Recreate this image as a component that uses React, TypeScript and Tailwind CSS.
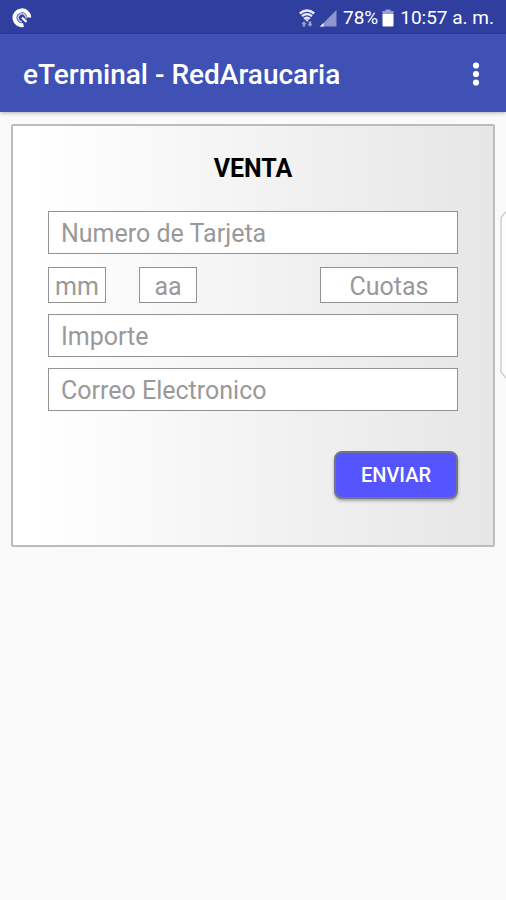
import React, { useState } from 'react';
import { clsx } from 'clsx';

interface FieldProps {
  id: string;
  label: string;
  value: string;
  onChange: (value: string) => void;
  className?: string;
  type?: string;
}

const Field: React.FC<FieldProps> = ({ id, label, value, onChange, className, type = 'text' }) => (
  <input
    id={id}
    type={type}
    aria-label={label}
    placeholder={label}
    value={value}
    onChange={(e) => onChange(e.target.value)}
    className={clsx(
      'block min-w-0 border border-[#929292] bg-white pt-0.5 text-[25px] leading-8 text-[#333] placeholder:text-[#999] focus:outline-none',
      className
    )}
  />
);

const StatusBar = () => (
  <div className="flex h-[34px] items-center justify-between bg-[#303f9f] px-3 pt-0.5 text-white">
    <svg width="20" height="20" viewBox="0 0 20 20" fill="none" stroke="#fff" aria-hidden="true">
      <path d="M17.3 9.5 A7.4 7.4 0 1 0 11.5 17" strokeWidth="4" />
      <path d="M14 10.5 A4 4 0 1 0 10 13.8" stroke="#c9cdea" strokeWidth="1.6" />
      <path d="M10 9.5 L14.5 14" strokeWidth="2.2" />
    </svg>
    <div className="flex items-center">
      <svg width="16" height="18" viewBox="0 0 16 18" fill="none" stroke="#e9ebf7" aria-hidden="true">
        <path d="M0.8 4.5 Q8 -1.5 15.2 4.5" strokeWidth="2.4" />
        <path d="M3 7.2 Q8 3 13 7.2" strokeWidth="2.2" />
        <path d="M5 9.8 Q8 7.3 11 9.8" strokeWidth="2.1" />
        <path d="M5.8 10.2 H10.2 L8 12.8 Z" fill="#e9ebf7" stroke="none" />
        <path d="M2.4 15 L5 12.2 L7.4 15 H6.3 V17.5 H3.7 V15 Z" fill="#99a1d3" stroke="none" />
        <path d="M8.6 15 H9.7 V12.5 H12.3 V15 H13.6 L11 17.8 Z" fill="#99a1d3" stroke="none" />
      </svg>
      <svg width="18" height="18" viewBox="0 0 18 18" className="ml-1" aria-hidden="true">
        <path d="M17.5 1 V17.5 H1 Z" fill="#8d96cd" />
        <path d="M4.5 14 V17.5 H1 Z" fill="#fff" />
      </svg>
      <span className="ml-1.5 text-[19px] leading-6">78%</span>
      <svg width="12" height="18" viewBox="0 0 12 18" className="ml-1" aria-hidden="true">
        <path d="M3.5 0.5 H8.5 V2 H11.5 V6 H0.5 V2 H3.5 Z" fill="#98a0d2" />
        <rect x="0.5" y="5" width="11" height="12.5" rx="1" fill="#fff" />
      </svg>
      <span className="ml-1.5 text-[19px] leading-6">10:57 a. m.</span>
    </div>
  </div>
);

export default function App() {
  const [card, setCard] = useState('');
  const [month, setMonth] = useState('');
  const [year, setYear] = useState('');
  const [installments, setInstallments] = useState('');
  const [amount, setAmount] = useState('');
  const [email, setEmail] = useState('');

  return (
    <div className="relative min-h-screen overflow-hidden bg-[#fafafa] font-['Roboto',sans-serif]">
      <StatusBar />

      <header className="flex h-[78px] items-center justify-between bg-[#3f51b5] pt-1 pr-5 pl-[23px] text-white shadow-[0_1px_4px_rgba(0,0,0,0.3)]">
        <h1 className="text-[28px] leading-8 font-medium">eTerminal - RedAraucaria</h1>
        <button type="button" aria-label="Menu" className="flex h-10 w-5 items-center justify-center">
          <svg width="8" height="26" viewBox="0 0 8 26" fill="#fff" aria-hidden="true">
            <circle cx="4" cy="3.5" r="3.1" />
            <circle cx="4" cy="12" r="3.1" />
            <circle cx="4" cy="20.5" r="3.1" />
          </svg>
        </button>
      </header>

      <main className="px-[11px] pt-3">
        <form
          onSubmit={(e) => e.preventDefault()}
          className="rounded-xs border-2 border-[#bcbcbc] bg-linear-to-r from-white from-5% to-[#e6e6e6] px-[35px] pt-[25px] pb-[46px]"
        >
          <h2 className="text-center text-[25px] leading-9 font-bold text-black">VENTA</h2>

          <Field id="card" label="Numero de Tarjeta" value={card} onChange={setCard} className="mt-6 h-[43px] w-full px-3" />

          <div className="mt-[13px] flex">
            <Field id="month" label="mm" value={month} onChange={setMonth} className="h-9 w-[58px] text-center" />
            <Field id="year" label="aa" value={year} onChange={setYear} className="ml-[33px] h-9 w-[58px] text-center" />
            <Field id="installments" label="Cuotas" value={installments} onChange={setInstallments} className="ml-auto h-9 w-[138px] text-center" />
          </div>

          <Field id="amount" label="Importe" value={amount} onChange={setAmount} className="mt-[11px] h-[43px] w-full px-3" />
          <Field id="email" type="email" label="Correo Electronico" value={email} onChange={setEmail} className="mt-[11px] h-[43px] w-full px-3" />

          <div className="mt-10 flex justify-end">
            <button
              type="submit"
              className="h-12 w-[124px] rounded-lg border-2 border-[#747487] bg-[#5555ff] text-xl font-medium text-white shadow-[0_2px_3px_rgba(0,0,0,0.3)]"
            >
              ENVIAR
            </button>
          </div>
        </form>
      </main>

      {/* edge panel handle */}
      <svg className="absolute top-[210px] right-0" width="6" height="170" viewBox="0 0 6 170" fill="#fdfdfd" stroke="#cfcfcf" aria-hidden="true">
        <path d="M6.5 1 L1 7.5 V162 L6.5 168.5" strokeWidth="1.5" />
      </svg>
    </div>
  );
}
